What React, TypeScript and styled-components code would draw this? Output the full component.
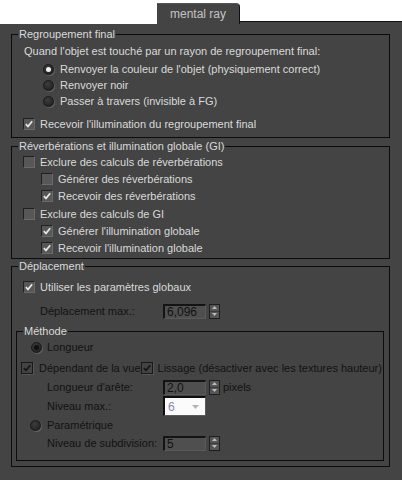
import React from 'react';
import styled, { createGlobalStyle, css } from 'styled-components';

const Global = createGlobalStyle`
  html, body { margin: 0; padding: 0; background: #ffffff; }
  body {
    font-family: "Liberation Sans", Arial, sans-serif;
    font-size: 11px;
    color: #dadada;
  }
  * { box-sizing: border-box; }
`;

const Page = styled.div`
  width: 402px;
  height: 480px;
  display: flex;
  flex-direction: column;
`;

const TabStrip = styled.div`
  display: flex;
  height: 24px;
  background: #ffffff;
`;

const TabSpacer = styled.div`
  width: 157px;
`;

const Tab = styled.div`
  width: 83px;
  margin-top: 3px;
  background: #444444;
  border-top: 1px solid #555555;
  border-right: 1px solid #111111;
  border-top-right-radius: 4px;
  color: #c4c4c4;
  font-size: 12px;
  display: flex;
  align-items: center;
  justify-content: center;
  padding-bottom: 1px;
`;

const TabRest = styled.div`
  flex: 1;
  align-self: flex-end;
  height: 3px;
  background: #444444;
  border-top: 1px solid #111111;
`;

const Panel = styled.div`
  flex: 1;
  background: #444444;
  padding: 10px 12px 0 11px;
  display: flex;
  flex-direction: column;
`;

const Group = styled.div<{ $mt?: number; $h: number; $ml?: number; $mr?: number }>`
  position: relative;
  border: 1px solid #0c0c0c;
  margin-top: ${(p) => p.$mt ?? 0}px;
  margin-left: ${(p) => p.$ml ?? 0}px;
  margin-right: ${(p) => p.$mr ?? 0}px;
  height: ${(p) => p.$h}px;
  display: flex;
  flex-direction: column;
`;

const Legend = styled.div`
  position: absolute;
  top: -8px;
  left: 6px;
  padding: 0 1px;
  background: #444444;
  color: #dadada;
  line-height: 14px;
  white-space: nowrap;
`;

const Row = styled.div<{ $top?: number; $indent?: number; $gap?: number }>`
  display: flex;
  align-items: center;
  height: 16px;
  margin-top: ${(p) => p.$top ?? 0}px;
  margin-left: ${(p) => p.$indent ?? 0}px;
  gap: ${(p) => p.$gap ?? 5}px;
  white-space: nowrap;
`;

const disabledText = css`
  color: #121212;
`;

const Text = styled.span<{ $disabled?: boolean; $w?: number }>`
  color: #dadada;
  ${(p) => p.$disabled && disabledText}
  ${(p) => p.$w !== undefined && `width: ${p.$w}px; flex: none;`}
`;

const Box = styled.span<{ $disabled?: boolean }>`
  width: 12px;
  height: 12px;
  flex: none;
  display: inline-flex;
  align-items: center;
  justify-content: center;
  ${(p) =>
    p.$disabled
      ? css`
          background: #444444;
          border: 1px solid #181818;
          box-shadow: 1px 1px 0 #555555;
        `
      : css`
          background: #575757;
          border-top: 1px solid #202020;
          border-left: 1px solid #202020;
          border-bottom: 1px solid #6a6a6a;
          border-right: 1px solid #6a6a6a;
        `}
`;

const RadioDot = styled.span<{ $on?: boolean; $disabled?: boolean }>`
  width: 11px;
  height: 11px;
  flex: none;
  border-radius: 50%;
  display: inline-flex;
  align-items: center;
  justify-content: center;
  background: radial-gradient(circle at 40% 35%, #3c3c3c 0%, #262626 70%);
  border: 1px solid #1a1a1a;
  box-shadow: 1px 1px 0 #606060;
  &::after {
    content: '';
    width: 5px;
    height: 5px;
    border-radius: 50%;
    background: ${(p) => (p.$on ? (p.$disabled ? '#101010' : '#f0f0f0') : 'transparent')};
  }
`;

const Field = styled.div`
  width: 43px;
  height: 15px;
  flex: none;
  background: #4f4f4f;
  border-top: 2px solid #141414;
  border-left: 2px solid #141414;
  border-bottom: 1px solid #5a5a5a;
  border-right: 1px solid #5a5a5a;
  color: #121212;
  font-size: 12px;
  line-height: 12px;
  padding-left: 2px;
  display: flex;
  align-items: center;
`;

const SpinBox = styled.div`
  width: 11px;
  height: 15px;
  flex: none;
  display: flex;
  flex-direction: column;
  background: #555555;
  border: 1px solid #1e1e1e;
`;

const SpinHalf = styled.div<{ $down?: boolean }>`
  flex: 1;
  display: flex;
  align-items: center;
  justify-content: center;
  ${(p) => p.$down && 'border-top: 1px solid #3a3a3a;'}
`;

const Dropdown = styled.div`
  width: 43px;
  height: 20px;
  flex: none;
  background: #fbfbfb;
  border-top: 2px solid #101010;
  border-left: 2px solid #101010;
  border-bottom: 1px solid #5a5a5a;
  border-right: 1px solid #5a5a5a;
  display: flex;
  align-items: center;
  justify-content: space-between;
  padding: 0 6px 0 3px;
  color: #8a86a8;
  font-size: 12px;
`;

const Column = styled.div<{ $pt?: number }>`
  display: flex;
  flex-direction: column;
  padding-top: ${(p) => p.$pt ?? 0}px;
`;

const CheckMark = ({ color }: { color: string }) => (
  <svg width="8" height="8" viewBox="0 0 8 8">
    <path d="M0.8 4.2 L3 6.4 L7.2 1.2" fill="none" stroke={color} strokeWidth="1.7" />
  </svg>
);

const Check = ({ checked, disabled }: { checked?: boolean; disabled?: boolean }) => (
  <Box $disabled={disabled}>{checked && <CheckMark color={disabled ? '#161616' : '#e6e6e6'} />}</Box>
);

const Spinner = () => (
  <SpinBox>
    <SpinHalf>
      <svg width="5" height="3" viewBox="0 0 5 3">
        <path d="M0 3 L2.5 0 L5 3 Z" fill="#bdbdbd" />
      </svg>
    </SpinHalf>
    <SpinHalf $down>
      <svg width="5" height="3" viewBox="0 0 5 3">
        <path d="M0 0 L2.5 3 L5 0 Z" fill="#bdbdbd" />
      </svg>
    </SpinHalf>
  </SpinBox>
);

export default function App() {
  return (
    <Page>
      <Global />
      <TabStrip>
        <TabSpacer />
        <Tab>mental ray</Tab>
        <TabRest />
      </TabStrip>
      <Panel>
        <Group $h={104}>
          <Legend>Regroupement final</Legend>
          <Column $pt={8}>
            <Row $indent={12}>
              <Text>Quand l'objet est touché par un rayon de regroupement final:</Text>
            </Row>
            <Row $top={2} $indent={31} $gap={6}>
              <RadioDot $on />
              <Text>Renvoyer la couleur de l'objet (physiquement correct)</Text>
            </Row>
            <Row $indent={31} $gap={6}>
              <RadioDot />
              <Text>Renvoyer noir</Text>
            </Row>
            <Row $indent={31} $gap={6}>
              <RadioDot />
              <Text>Passer à travers (invisible à FG)</Text>
            </Row>
            <Row $top={7} $indent={11}>
              <Check checked />
              <Text>Recevoir l'illumination du regroupement final</Text>
            </Row>
          </Column>
        </Group>

        <Group $mt={8} $h={113}>
          <Legend>Réverbérations et illumination globale (GI)</Legend>
          <Column $pt={7}>
            <Row $indent={11}>
              <Check />
              <Text>Exclure des calculs de réverbérations</Text>
            </Row>
            <Row $top={1} $indent={29}>
              <Check />
              <Text>Générer des réverbérations</Text>
            </Row>
            <Row $top={1} $indent={29}>
              <Check checked />
              <Text>Recevoir des réverbérations</Text>
            </Row>
            <Row $top={2} $indent={11}>
              <Check />
              <Text>Exclure des calculs de GI</Text>
            </Row>
            <Row $top={1} $indent={29}>
              <Check checked />
              <Text>Générer l'illumination globale</Text>
            </Row>
            <Row $top={1} $indent={29}>
              <Check checked />
              <Text>Recevoir l'illumination globale</Text>
            </Row>
          </Column>
        </Group>

        <Group $mt={7} $h={201}>
          <Legend>Déplacement</Legend>
          <Column $pt={12}>
            <Row $indent={11}>
              <Check checked />
              <Text>Utiliser les paramètres globaux</Text>
            </Row>
            <Row $top={8} $indent={28} $gap={3}>
              <Text $disabled $w={120}>Déplacement max.:</Text>
              <Field>6,096</Field>
              <Spinner />
            </Row>
          </Column>
          <Group $mt={12} $ml={4} $mr={5} $h={130}>
            <Legend>Méthode</Legend>
            <Column $pt={7}>
              <Row $indent={14} $gap={5}>
                <RadioDot $on $disabled />
                <Text $disabled>Longueur</Text>
              </Row>
              <Row $top={5} $indent={4} $gap={6}>
                <Check checked disabled />
                <Text $disabled>Dépendant de la vue</Text>
                <Row $indent={-6} $gap={5}>
                  <Check checked disabled />
                  <Text $disabled>Lissage (désactiver avec les textures hauteur)</Text>
                </Row>
              </Row>
              <Row $top={3} $indent={30} $gap={3}>
                <Text $disabled $w={113}>Longueur d'arête:</Text>
                <Field>2,0</Field>
                <Spinner />
                <Text $disabled>pixels</Text>
              </Row>
              <Row $top={3} $indent={30} $gap={3}>
                <Text $disabled $w={113}>Niveau max.:</Text>
                <Dropdown>
                  <span>6</span>
                  <svg width="7" height="4" viewBox="0 0 7 4">
                    <path d="M0 0 L3.5 4 L7 0 Z" fill="#b4b4b4" />
                  </svg>
                </Dropdown>
              </Row>
              <Row $top={3} $indent={13} $gap={6}>
                <RadioDot $disabled />
                <Text $disabled>Paramétrique</Text>
              </Row>
              <Row $top={2} $indent={30} $gap={3}>
                <Text $disabled $w={113}>Niveau de subdivision:</Text>
                <Field>5</Field>
                <Spinner />
              </Row>
            </Column>
          </Group>
        </Group>
      </Panel>
    </Page>
  );
}
